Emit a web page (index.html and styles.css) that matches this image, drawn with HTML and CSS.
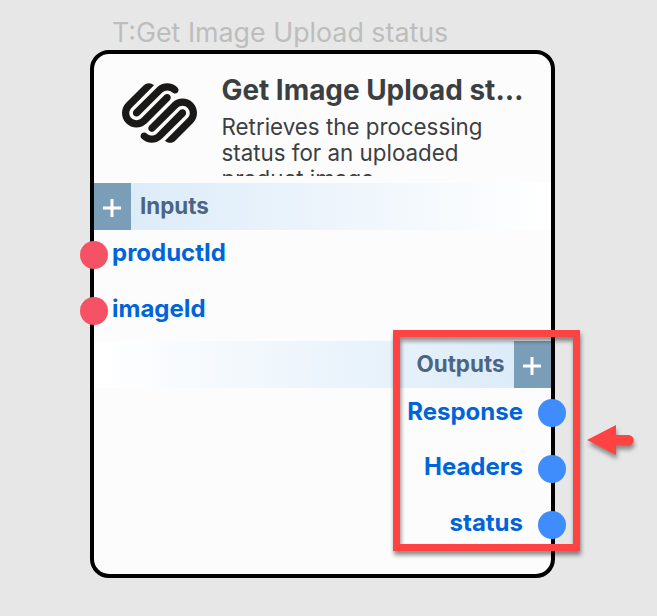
FILE: index.html
```html
<!DOCTYPE html>
<html lang="en">
<head>
<meta charset="utf-8">
<title>Get Image Upload status</title>
<link rel="stylesheet" href="styles.css">
</head>
<body>
<main class="canvas">
  <div class="node-title">T:Get Image Upload status</div>
  <section class="node">
    <header class="node-head">
      <svg class="logo" viewBox="0 2.45 24 19.1" fill="#1a1918"><path d="M22.655 8.719c-1.802-1.801-4.726-1.801-6.564 0l-7.351 7.35c-.45.45-.45 1.2 0 1.65.45.449 1.2.449 1.65 0l7.351-7.351c.899-.899 2.362-.899 3.264 0 .9.9.9 2.364 0 3.264l-7.239 7.239c.9.899 2.362.899 3.263 0l5.589-5.589c1.836-1.838 1.836-4.763.037-6.563zm-2.475 2.437c-.451-.45-1.201-.45-1.65 0l-7.354 7.389c-.9.899-2.361.899-3.262 0-.45-.45-1.2-.45-1.65 0s-.45 1.2 0 1.649c1.801 1.801 4.726 1.801 6.564 0l7.351-7.35c.449-.487.449-1.239.001-1.688zm-2.439-7.35c-1.801-1.801-4.726-1.801-6.564 0l-7.351 7.351c-.45.449-.45 1.199 0 1.649s1.2.45 1.65 0l7.395-7.351c.9-.899 2.371-.899 3.27 0 .451.45 1.201.45 1.65 0 .421-.487.421-1.199-.05-1.649zm-2.475 2.437c-.45-.45-1.2-.45-1.65 0l-7.351 7.389c-.899.9-2.363.9-3.265 0-.9-.899-.9-2.363 0-3.264l7.239-7.239c-.9-.9-2.362-.9-3.263 0L1.35 8.719c-1.8 1.8-1.8 4.725 0 6.563 1.801 1.801 4.725 1.801 6.564 0l7.35-7.351c.451-.488.451-1.238.002-1.688z"/></svg>
      <div class="summary">
        <h1>Get Image Upload status</h1>
        <p>Retrieves the processing status for an uploaded product image.</p>
      </div>
    </header>
    <div class="bar bar-in">
      <span class="add"><svg viewBox="0 0 18 18"><path d="M9 0v18M0 9h18"/></svg></span>
      <span class="bar-label">Inputs</span>
    </div>
    <ul class="ports ports-in">
      <li><i class="dot"></i><span>productId</span></li>
      <li><i class="dot"></i><span>imageId</span></li>
    </ul>
    <div class="bar bar-out">
      <span class="bar-label">Outputs</span>
      <span class="add"><svg viewBox="0 0 18 18"><path d="M9 0v18M0 9h18"/></svg></span>
    </div>
    <ul class="ports ports-out">
      <li><span>Response</span><i class="dot"></i></li>
      <li><span>Headers</span><i class="dot"></i></li>
      <li><span>status</span><i class="dot"></i></li>
    </ul>
  </section>
  <div class="highlight"></div>
  <svg class="arrow" viewBox="0 0 48 32"><path d="M1 16 30 1V11H42.500A5.200 5.200 0 0 1 42.500 21.500H30V31Z" fill="#ff4343"/></svg>
</main>
</body>
</html>
```
FILE: styles.css
```css
* { box-sizing: border-box; }
body { margin: 0; background: #e7e7e7; font-family: Inter, "Liberation Sans", sans-serif; }
.canvas { position: relative; width: 657px; height: 616px; padding: 15px 0 0 90px; overflow: hidden; }
.node-title { height: 34.500px; padding-left: 22px; font-size: 26.800px; line-height: 35px; color: #bdbdbd; white-space: nowrap; }
.node { width: 464.500px; height: 528px; border: 4px solid #000; border-radius: 19px; background: #fcfcfc; }
.node-head { display: flex; height: 129.500px; padding: 20px 24px 0 28px; }
.logo { flex: none; width: 75px; height: 60px; margin-top: 9.500px; }
.summary { width: 304px; height: 102px; margin-left: 24.500px; overflow: hidden; color: #3c3f42; }
h1 { margin: 0; font-size: 27.900px; line-height: 33px; font-weight: 700; white-space: nowrap; overflow: hidden; text-overflow: ellipsis; }
p { width: 290px; margin: 7px 0 0; font-size: 22.350px; line-height: 26px; }
.bar { display: flex; height: 47px; }
.bar-in { background: linear-gradient(90deg, #d9eaf8, #fff); }
.bar-out { justify-content: flex-end; background: linear-gradient(270deg, #d9eaf8, #fff); }
.bar-label { padding: 0 9px; font-size: 22.400px; line-height: 45px; font-weight: 650; color: #4c6585; }
.add { display: flex; align-items: center; justify-content: center; width: 37px; padding-top: 3px; background: #7a9db8; }
.bar-in .add { padding-right: 1px; }
.add svg { width: 18px; height: 18px; stroke: #fff; stroke-width: 3; }
.ports { margin: 0; padding: 0; list-style: none; font-size: 24px; font-weight: 680; color: #0064d9; }
.ports li { display: flex; align-items: center; height: 56px; }
.ports span { position: relative; top: -3px; }
.ports-in { height: 111px; margin-top: 0; }
.ports-in li { margin-left: -14px; gap: 4px; }
.ports-in li:first-child { height: 50px; }
.ports-in li + li { height: 62px; }
.dot { flex: none; width: 28px; height: 28px; border-radius: 50%; background: #f55266; }
.ports-out li { justify-content: flex-end; margin-right: -15.500px; gap: 15px; }
.ports-out li:first-child { height: 50px; }
.ports-out li:nth-child(2) { height: 62px; }
.ports-out li:nth-child(3) { height: 50px; }
.ports-out li:first-child span { top: -2px; }
.ports-out .dot { background: #3f8cfc; }
.highlight { position: absolute; left: 393px; top: 330px; width: 187px; height: 221px; border: 7px solid #ff4343; filter: drop-shadow(1px 4px 2px rgba(0,0,0,.45)); }
.arrow { position: absolute; left: 586px; top: 424px; width: 48px; height: 32px; overflow: visible; filter: drop-shadow(1px 4px 2px rgba(0,0,0,.4)); }
```
